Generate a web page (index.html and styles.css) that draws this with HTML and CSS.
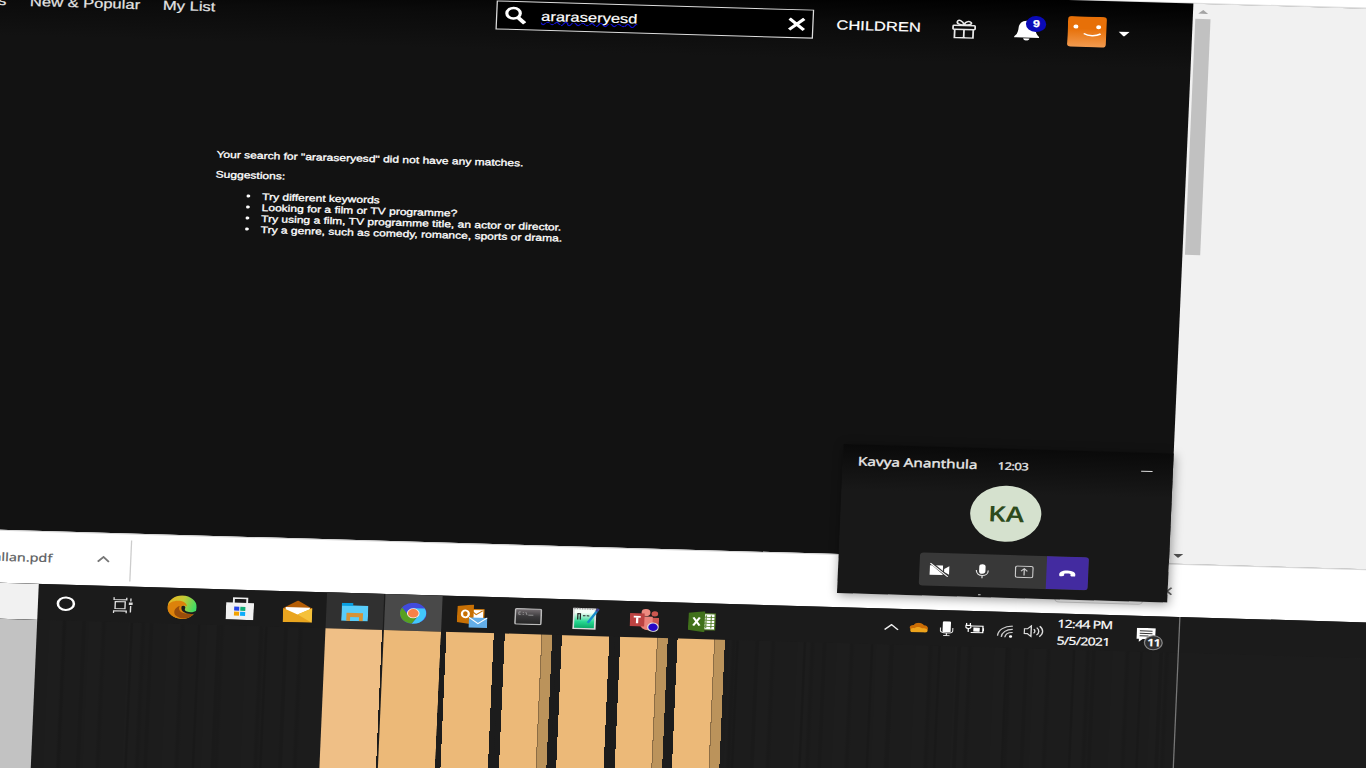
FILE: index.html
```html
<!DOCTYPE html>
<html lang="en">
<head>
<meta charset="utf-8">
<title>Search</title>
<link rel="stylesheet" href="styles.css">
</head>
<body>
<div class="screen">
<div class="desktop">
  <div class="toolbar-edge"></div>
  <div class="browser">
    <main class="page">
      <header class="header">
        <nav class="nav"><span>s</span><span class="n2">New &amp; Popular</span><span class="n3">My List</span></nav>
        <div class="search">
          <svg class="lens" viewBox="0 0 17 19"><circle cx="6.700" cy="7.300" r="5.300" fill="none" stroke="#fff" stroke-width="2.500"/><path d="M10.500 11.500l5.300 5.700" stroke="#fff" stroke-width="3.400"/></svg>
          <span class="query">araraseryesd</span>
          <svg class="clear" viewBox="0 0 14 14"><path d="M1 1.300l12 11.500M13 1.300l-12 11.500" stroke="#fff" stroke-width="2.800"/></svg>
        </div>
        <span class="children">CHILDREN</span>
        <svg class="gift" viewBox="0 0 19 20" fill="none" stroke="#e8e8e8" stroke-width="1.400"><rect x=".8" y="6.500" width="17.400" height="4" rx=".8"/><path d="M2.200 10.500v8.300h14.600v-8.300M9.500 10.500v8.300M9.500 6C8 6 3.600 5.500 4 3c.4-3 4.500-1.500 5.500 3zM9.500 6c.5-4 5-4.500 5.600-2.200C15.600 5.800 12 6 9.500 6z"/></svg>
        <div class="bell-wrap">
          <svg class="bell" viewBox="0 0 20 21" fill="#fff"><path d="M10 1C5.500 1 3.700 4.500 3.400 8c-.3 4-.8 6.500-3.200 8.700v1h19.600v-1C17.400 14.500 17 12 16.600 8 16.200 4.500 14.500 1 10 1zM7.300 18.500h5c-.2 2.900-4.800 2.900-5 0z"/></svg>
          <b class="count">9</b>
        </div>
        <svg class="profile" viewBox="0 0 31 31"><defs><linearGradient id="og" x2="0" y2="1"><stop offset=".4" stop-color="#e77008"/><stop offset="1" stop-color="#f29b50"/></linearGradient></defs><rect width="31" height="31" rx="3" fill="url(#og)"/><circle cx="6.500" cy="10.500" r="2" fill="#fff"/><circle cx="24.700" cy="10.500" r="2" fill="#fff"/><path d="M13 17.300c4 2.600 9.500 2.600 13.500 0" fill="none" stroke="#fff" stroke-width="1.500"/></svg>
        <svg class="caret" viewBox="0 0 9 5"><path d="M0 0h9L4.500 5z" fill="#fff"/></svg>
      </header>
      <section class="results">
        <p>Your search for "araraseryesd" did not have any matches.</p>
        <p>Suggestions:</p>
        <ul>
          <li>Try different keywords</li>
          <li>Looking for a film or TV programme?</li>
          <li>Try using a film, TV programme title, an actor or director.</li>
          <li>Try a genre, such as comedy, romance, sports or drama.</li>
        </ul>
      </section>
    </main>
    <div class="scrollbar">
      <svg class="arrow up" viewBox="0 0 8 4"><path d="M0 4h8L4 0z" fill="#a3a3a3"/></svg>
      <div class="thumb"></div>
      <svg class="arrow down" viewBox="0 0 8 4"><path d="M0 0h8L4 4z" fill="#505050"/></svg>
    </div>
  </div>
  <div class="downloads">
    <span class="file">allan.pdf</span>
    <svg class="chev" viewBox="0 0 10 7"><path d="M.6 6L5 1.200 9.400 6" fill="none" stroke="#777" stroke-width="1.600"/></svg>
    <i class="divider"></i>
    <span class="show-all"></span>
    <svg class="close" viewBox="0 0 9 9"><path d="M1 1l7 7M8 1L1 8" stroke="#666" stroke-width="1.600"/></svg>
  </div>
  <div class="taskbar">
    <div class="side"></div>
    <div class="cell"><svg width="16" height="16" viewBox="0 0 16 16"><circle cx="8" cy="8" r="6.300" fill="none" stroke="#fff" stroke-width="2"/></svg></div>
    <div class="cell"><svg class="tv" width="16" height="16" viewBox="0 0 16 16" fill="none" stroke="#ddd" stroke-width="1.100"><path d="M.7 0v2.400h10V0M.7 16v-2.400h10V16M1.800 4.300h7.800v7H1.800zM14 1v3M14 8.500V15"/><path d="M12.500 6.200h3" stroke-width="2.500"/></svg></div>
    <div class="cell"><svg width="23" height="24" viewBox="0 0 24 24"><defs><linearGradient id="e1" x1="0" y1="0" x2="1" y2=".3"><stop offset="0" stop-color="#eeb21e"/><stop offset=".55" stop-color="#c3cb37"/><stop offset="1" stop-color="#42db63"/></linearGradient></defs><circle cx="12" cy="12" r="12" fill="url(#e1)"/><path d="M0 12C1 4 15 3 16 11c-4-2-5 1-4 4 2 4 7 5 10 3-3 7-12 8-17 4-3-2-5-5-5-10z" fill="#dc820b"/><path d="M10 11c-2 6 3 9 12 7-3 6-10 8-15 3-3-4 0-9 3-10z" fill="#994d0b"/><path d="M11.500 11.500c1-2 4-1 3 2-.5 1.500 0 2.500 1.500 3 3 1 6 .5 8-1.500l-1.500 3.500c-6 1.500-12-1-11-7z" fill="#1b1b1b"/></svg></div>
    <div class="cell"><svg width="22" height="23" viewBox="0 0 22 23"><path d="M6 7V1.500h10.500V7" fill="none" stroke="#eee" stroke-width="1.500"/><path d="M0 6h22v17H0z" fill="#f1f1f1"/><path d="M6.500 10h4v4h-4z" fill="#2443e8"/><path d="M11.300 10h4v4h-4z" fill="#11af77"/><path d="M6.500 15h4v4h-4z" fill="#f2a200"/><path d="M11.300 15h4v4h-4z" fill="#0cacfa"/></svg></div>
    <div class="cell"><svg class="mail" width="23" height="22" viewBox="0 0 23 22"><path d="M0 8L11.500 0 23 8v3H0z" fill="#b45d05"/><path d="M2 7h19v8H2z" fill="#fff"/><path d="M0 8l11.500 6L23 7.500V22H0z" fill="#e9a51f"/><path d="M23 7.500V22L11.500 14z" fill="#f5c13a"/></svg></div>
    <div class="cell hov1"><svg width="21" height="18" viewBox="0 0 21 18"><path d="M0 1h8l1 1.500h12V18H0z" fill="#58cdfa"/><path d="M0 0h9v3H0z" fill="#089ee0"/><path d="M4 18V10h13v8h-3v-4H7v4z" fill="#d59338"/></svg></div>
    <div class="cell hov2"><svg width="21" height="21" viewBox="0 0 21 21"><circle cx="10.500" cy="10.500" r="10.500" fill="#414bdc"/><path d="M10.500 5.500h8.800A10.500 10.500 0 0 1 9.500 21l5-8z" fill="#42c7fa"/><path d="M1.600 5A10.500 10.500 0 0 0 9.500 21l4.500-7.500-7-.5z" fill="#57a022"/><circle cx="10.500" cy="10.500" r="5" fill="#f4eee8"/><circle cx="10.500" cy="10.500" r="4.200" fill="#f98147"/></svg></div>
    <div class="cell"><svg class="outlook" width="24" height="24" viewBox="0 0 24 24"><path d="M12 5h9v9h-9z" fill="#fff" stroke="#d47b08"/><path d="M12 7l3 3 5-4" fill="none" stroke="#c97205"/><path d="M0 2l13-2v20L0 18z" fill="#c87004"/><ellipse cx="6.500" cy="9.500" rx="2.700" ry="3.500" fill="none" stroke="#fff" stroke-width="1.800"/><path d="M9.500 13H24v10H9.500z" fill="#63aee9"/><path d="M9.500 13l7.200 6 7.300-6" fill="none" stroke="#fff"/></svg></div>
    <div class="cell"><svg width="22" height="17" viewBox="0 0 22 17"><defs><linearGradient id="cg" x2="0" y2="1"><stop stop-color="#777074"/><stop offset=".5" stop-color="#39383a"/><stop offset="1" stop-color="#242424"/></linearGradient></defs><rect x=".8" y=".8" width="20.400" height="15.400" rx="1" fill="url(#cg)" stroke="#bcbcbc" stroke-width="1.200"/><path d="M5 4H3.500v2.500H5M7 4v1M7 6v1M9 4l1 3M11 7h4" fill="none" stroke="#a2a2a2" stroke-width=".7"/></svg></div>
    <div class="cell"><svg width="21" height="23" viewBox="0 0 21 23"><defs><linearGradient id="ng" x2="0" y2="1"><stop offset=".2" stop-color="#f5fff8"/><stop offset=".65" stop-color="#26d991"/><stop offset="1" stop-color="#07a363"/></linearGradient></defs><path d="M.7 2h17v20H.7z" fill="url(#ng)" stroke="#ddd" stroke-width="1.400"/><path d="M1 2h15" stroke="#999" stroke-width="1.500" stroke-dasharray="1 1"/><path d="M4 13V7h2v6M8 9h2M11 9h2" fill="none" stroke="#222"/><path d="M12 16l8-14" stroke="#168ccb" stroke-width="2"/><path d="M18.500 4.500L20 1.500" stroke="#414090" stroke-width="2"/></svg></div>
    <div class="cell"><svg width="23" height="23" viewBox="0 0 23 23"><circle cx="12.500" cy="4" r="3.500" fill="#ed8b80"/><circle cx="19.500" cy="5" r="2.600" fill="#cd5750"/><path d="M16 9h7v9h-7z" fill="#cc5851"/><path d="M8 8h10v13c-6 2-9-1-10-5z" fill="#eb837b"/><path d="M0 5h11.500v13H0z" fill="#bd4342"/><path d="M3 8.500h5.500M5.800 8.500v6.500" stroke="#fff" stroke-width="1.800"/><circle cx="18.500" cy="18.500" r="4.200" fill="#2507c5" stroke="#ddd"/></svg></div>
    <div class="cell"><svg width="22" height="21" viewBox="0 0 22 21"><path d="M11 2.500h10v16H11z" fill="#fff" stroke="#548127"/><path d="M14 4v13M18 4v13M12 6h9M12 9h9M12 12h9M12 15h9" stroke="#517e24" stroke-width=".8"/><path d="M0 2l13-2v21L0 19z" fill="#41711b"/><path d="M4 6.500l5 8M9 6.500l-5 8" stroke="#fff" stroke-width="1.800"/></svg></div>
    <div class="tray">
      <svg width="12" height="7" viewBox="0 0 12 7"><path d="M.7 6L6 1l5.300 5" fill="none" stroke="#eee" stroke-width="1.300"/></svg>
      <svg width="15" height="10" viewBox="0 0 15 10"><path d="M2 7.500C-1 6 .5 2.500 3.500 2.700 5-.8 10-.5 11.500 2.700c3 0 4 3 2.700 5z" fill="#cb6d05"/><path d="M1 8.500c-.5-2 1-3 3-2.700 2-2 5-1.500 6 0 2.500-.5 5 .5 4.500 2.700-.3 1-1 1.500-2.500 1.500H3.500C2 10 1.200 9.500 1 8.500z" fill="#eda31c"/></svg>
      <svg width="11" height="15" viewBox="0 0 11 15"><rect x="2.300" y="0" width="6.400" height="11" rx="1" fill="#fff"/><path d="M.6 6.500v3c0 3 9.800 3 9.800 0v-3M5.500 12v2M3 14.300h5" fill="none" stroke="#ddd" stroke-width="1"/></svg>
      <svg width="15" height="12" viewBox="0 0 15 12" fill="none" stroke="#fff"><path d="M5 3h9v6.500H4.500"/><path d="M7 5h4v3H7zM14.500 5v3" fill="#fff"/><path d="M1 0v2M4 0v2M.5 2.500h4v1.500c0 2-4 2-4 0zM2.500 5.500V9"/></svg>
      <svg class="wifi" width="13" height="13" viewBox="0 0 13 13" fill="none" stroke="#ccc" stroke-width="1.100"><path d="M.7 11C1 5 6 1 12.500 1M3.700 12C4 7.500 7.500 4.200 12.500 4.200M6.500 12.300c.3-3 2.500-5 6-5"/><circle cx="11" cy="11.300" r="1.300" fill="#fff" stroke="none"/></svg>
      <svg width="16" height="13" viewBox="0 0 16 13" fill="none" stroke="#ddd" stroke-width="1.100"><path d="M.6 4.200h2.500L6 1.200v10.600L3.100 9H.6zM8 4.500c1.300 1 1.300 3 0 4M10.300 2.800c2.300 2 2.300 5.500 0 7.500M12.600 1.300c3.300 3 3.300 7.500 0 10.500"/></svg>
      <div class="clock"><span>12:44 PM</span><span>5/5/2021</span></div>
      <div class="notes"><svg width="15" height="15" viewBox="0 0 15 15"><path d="M0 0h15v11H5l-3 3v-3H0z" fill="#fff"/><path d="M2.500 3h10M2.500 5.500h10M2.500 8h7" stroke="#333" stroke-width="1"/></svg><span class="badge">11</span></div>
    </div>
  </div>
  <div class="floor">
    <div class="side"></div>
    <div class="gap"></div>
    <div class="lane l1"></div><div class="lane l2"></div><div class="lane bar"></div><div class="lane bar two"></div><div class="lane bar"></div><div class="lane bar two"></div><div class="lane bar two"></div>
  </div>
  <i class="tray-line"></i>
  <aside class="call">
    <div class="call-head"><span class="who">Kavya Ananthula</span><span class="time">12:03</span><i class="min"></i></div>
    <div class="face">KA</div>
    <div class="controls">
      <div><svg width="16" height="16" viewBox="0 0 16 16"><path d="M0 3.500h10.500v9.500H0zM11.500 7l4-3v8.500l-4-2.500z" fill="#fff"/><path d="M1 1l14 14" stroke="#383838" stroke-width="2.500"/><path d="M.5 1.500l14 13" stroke="#fff" stroke-width="1"/></svg></div>
      <div><svg width="11" height="16" viewBox="0 0 11 16"><rect x="3" y="1" width="5" height="9.500" rx="2.500" fill="#fff"/><path d="M.8 7c0 7 9.400 7 9.400 0M5.500 12.500V15" fill="none" stroke="#ddd"/></svg></div>
      <div><svg width="15" height="13" viewBox="0 0 15 13" fill="none" stroke="#ccc"><rect x=".6" y=".8" width="13.800" height="11.200" rx="1.500"/><path d="M7.500 10V3.500M5 5.800l2.500-2.500L10 5.800"/></svg></div>
      <div class="hang"><svg width="15" height="8" viewBox="0 0 15 9"><path d="M.5 7C-.5 3 3 1 7.500 1s8 2 7 6c-.2 1-3.700.6-4.200-.4V4.700c-1.600-.5-4-.5-5.600 0v1.900C4.200 7.600.7 8 .5 7z" fill="#fff"/></svg></div>
    </div>
    <i class="tick"></i>
  </aside>
</div>
</div>
</body>
</html>
```
FILE: styles.css
```css
* { box-sizing: border-box; }
html, body { margin: 0; height: 768px; overflow: hidden; background: #1c1c1c; }
.screen { position: relative; width: 1366px; height: 768px; overflow: hidden; }
svg { display: block; flex: none; }
p, ul { margin: 0; }

/* The whole desktop is seen slightly skewed and stretched sideways */
.desktop {
  position: absolute; left: 0; top: -40px; width: 1112px; height: 812px;
  display: flex; flex-direction: column;
  transform-origin: 0 0; transform: matrix(1.27, 0.03683, -0.0438, 1, 0, 0);
  font-family: "Liberation Sans", Arial, sans-serif; color: #fff; background: #1c1c1c;
  -webkit-text-stroke: 0.2px;
}
.toolbar-edge { height: 9px; flex: none; background: #fff; border-bottom: 1px solid #ddd; }
.browser { height: 560px; flex: none; display: flex; background: #f1f1f1; }
.page { width: 940.3px; flex: none; background: linear-gradient(#000 0, #0b0b0b 30px, #121212 66px, #121212); }
.header { height: 63px; display: flex; align-items: center; font-size: 13px; white-space: nowrap; }
.nav { width: 392px; display: flex; color: #e5e5e5; }
.n2 { margin-left: 18.500px; width: 86px; }
.n3 { margin-left: 18.800px; }
.search { width: 249.500px; height: 29px; display: flex; align-items: center; border: 1px solid #ddd; background: #000; padding-left: 5.500px; }
.lens { width: 17px; height: 19px; }
.query { margin-left: 12px; width: 76px; text-decoration: underline wavy #1010d0 1px; text-underline-offset: 0; text-decoration-skip-ink: none; }
.clear { width: 13.500px; height: 14px; margin-left: 118.500px; }
.children { margin-left: 18.500px; width: 67px; }
.gift { width: 19px; height: 20px; margin-left: 23.500px; }
.bell-wrap { position: relative; margin-left: 30px; width: 20px; }
.bell { width: 20px; height: 21px; }
.count { position: absolute; left: 9.800px; top: -4px; width: 16px; height: 16px; border-radius: 50%; background: #0a0ab8; font-size: 10px; line-height: 16px; text-align: center; }
.profile { width: 30.500px; height: 30.500px; margin-left: 22.500px; }
.caret { width: 9px; height: 5px; margin: 1px 0 0 9px; }
.results { padding: 109.500px 0 0 177px; font-size: 9.480px; line-height: 11.100px; white-space: nowrap; -webkit-text-stroke: 0.3px; }
.results p { height: 20.500px; }
.results ul { padding-left: 37.300px; list-style: none; }
.results li { position: relative; }
.results li::before { content: ""; position: absolute; left: -12px; top: 4px; width: 2.600px; height: 3px; border-radius: 50%; background: #fff; }

.scrollbar { width: 16px; padding-left: 2px; display: flex; flex-direction: column; }
.arrow { width: 8px; height: 4px; margin-left: 2px; }
.up { margin-top: 6px; }
.thumb { width: 12.200px; height: 236px; margin-top: 5px; background: #c1c1c1; }
.down { margin-top: 299px; margin-left: 1px; }

.downloads { height: 53px; flex: none; display: flex; align-items: center; background: #fff; border-top: 1px solid #d8d8d8; }
.file { width: 61.700px; margin-top: -2px; display: flex; justify-content: flex-end; font: 11.300px "Noto Sans", sans-serif; color: #5a5c60; }
.chev { width: 10px; height: 7px; margin-left: 35px; margin-top: -1px; }
.divider { width: 1px; height: 41px; margin-left: 16.800px; background: #ccc; }
.show-all { width: 70px; height: 24px; margin-left: 727px; margin-top: 5px; border: 1px solid #d4d4d4; border-radius: 4px; }
.close { width: 9px; height: 9px; margin-left: 14px; margin-top: 0; }

.taskbar { height: 36px; flex: none; display: flex; background: #1b1b1b; }
.side { width: 51.600px; flex: none; background: #f1f1f1; }
.cell { width: 45.500px; flex: none; display: flex; align-items: center; justify-content: center; }
.cell svg { margin-top: 1px; }
.cell .tv { margin-right: 2px; }
.cell .outlook { margin: 3px 0 0 2px; }
.cell .mail { margin-top: 3px; }
.hov1 { background: #303030; border-right: 1px solid #1c1c1c; }
.hov2 { background: #494949; }
.tray { margin-left: 120px; display: flex; align-items: center; gap: 8.800px; white-space: nowrap; }
.tray .wifi { margin: 3px -1px 0 1px; }
.clock { width: 48px; margin: 2px 0 0 2px; display: flex; flex-direction: column; font: 11px/16.800px "Noto Sans", sans-serif; letter-spacing: -0.520px; }
.notes { position: relative; margin-left: 5.500px; margin-top: 2px; }
.badge { position: absolute; left: 6.500px; top: 7px; width: 15px; height: 15px; border: 1px solid #888; border-radius: 50%; background: #303030; font: 600 10px/13px "Noto Sans", sans-serif; letter-spacing: -0.600px; text-align: center; }

.floor {
  flex: 1; display: flex;
  background:
    linear-gradient(90deg, transparent 951px, #1c1c1c 951px),
    repeating-linear-gradient(90deg, transparent 0 19px, #191919 20px 21px, transparent 22px 34px, #1a1a1a 35px 37px, transparent 38px 53px),
    repeating-linear-gradient(90deg, #1d1d1d 0 9px, #1a1a1a 11px 12px, #1c1c1c 14px 31px);
}
.floor .side { background: #c2c2c2; }
.gap { width: 227.900px; flex: none; }
.lane { width: 45.420px; flex: none; }
.l1 { background: linear-gradient(90deg, #efbf86 44.500px, #1c1c1c 44.500px); }
.l2 { background: linear-gradient(90deg, #ecb978 45px, #1c1c1c 45px); }
.bar { background: linear-gradient(90deg, #1c1c1c 4.200px, #ecb978 4.200px 41.500px, #1c1c1c 41.500px); }
.two { background: linear-gradient(90deg, #1c1c1c 4.200px, #ecb978 4.200px 33px, #8c6d45 33px 33.800px, #bb935b 33.800px 41.500px, #1c1c1c 41.500px); }
.tray-line { position: absolute; left: 950.300px; top: 622px; width: 1px; height: 190px; background: #777; }

.call {
  position: absolute; left: 680.300px; top: 458.800px; width: 260px; height: 148.800px;
  background: linear-gradient(#0a0a0a, #181818 45px); box-shadow: 1px 2px 9px rgba(0, 0, 0, .4);
  display: flex; flex-direction: column; align-items: center; font-family: "Noto Sans", sans-serif;
}
.call-head { width: 100%; height: 37.500px; padding: 8px 0 0 11.700px; display: flex; align-items: baseline; line-height: 18px; white-space: nowrap; color: #e8e8e8; }
.who { width: 110px; font-size: 12px; letter-spacing: -0.030px; -webkit-text-stroke: 0.35px; }
.time { width: 113.500px; font-size: 10.200px; letter-spacing: -0.400px; -webkit-text-stroke: 0.3px; }
.min { width: 8.500px; height: 1px; background: #ddd; align-self: flex-start; margin-top: 10.500px; }
.face { width: 56px; height: 56px; border-radius: 50%; background: #d5e1ce; color: #2d4a1c; font-size: 21.500px; font-weight: 600; line-height: 56px; text-align: center; -webkit-text-stroke: 0; }
.controls { width: 133px; height: 33px; margin-top: 12.800px; display: flex; border-radius: 3px; overflow: hidden; background: #383838; }
.controls div { flex: 1; display: flex; align-items: center; justify-content: center; }
.controls .hang { background: #432ba0; }
.tick { width: 2px; height: 1px; margin: 7px 36px 0 0; background: #ccc; }
```
